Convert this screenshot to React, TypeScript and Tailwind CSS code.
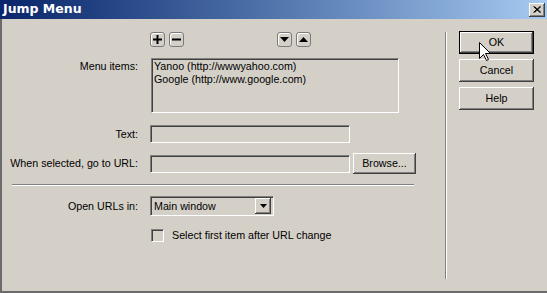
import React from 'react';

const sunken =
  'border border-t-[#808080] border-l-[#808080] border-b-white border-r-white shadow-[inset_1px_1px_0_#404040,inset_-1px_-1px_0_#d4d0c8]';
const raised =
  'bg-[#d4d0c8] shadow-[inset_-1px_-1px_0_#404040,inset_1px_1px_0_#ffffff,inset_-2px_-2px_0_#808080,inset_2px_2px_0_#d4d0c8]';

function ToolButton({ children }: { children: React.ReactNode }) {
  return (
    <div className="w-[15px] h-[15px] rounded-[3px] border border-[#7a7a7a] shadow-[inset_1px_1px_0_#ffffff] flex items-center justify-center">
      {children}
    </div>
  );
}

function Label({ children, top }: { children: React.ReactNode; top?: boolean }) {
  return (
    <div className={`w-[136px] shrink-0 text-right leading-[13px] ${top ? 'pt-[2px] self-start' : ''}`}>
      {children}
    </div>
  );
}

function App() {
  return (
    <div className="relative w-[547px] h-[293px] flex flex-col bg-[#d4d0c8] text-black text-[10.7px] font-['Liberation_Sans',Arial,sans-serif] overflow-hidden select-none">
      {/* title bar */}
      <div className="h-[19px] shrink-0 flex items-center justify-between pl-[3px] pr-[2px] bg-linear-to-r from-[#0a246a] to-[#a6caf0]">
        <span className="text-white font-bold text-[12.5px] leading-none font-['DejaVu_Sans',sans-serif]">Jump Menu</span>
        <div className={`w-[16px] h-[14px] flex items-center justify-center ${raised}`}>
          <svg width="8" height="7" viewBox="0 0 8 7">
            <path d="M0.5 0.5 L7 6.5 M1.5 0.5 L8 6.5 M7 0.5 L0.5 6.5 M8 0.5 L1.5 6.5" stroke="#000" strokeWidth="1" />
          </svg>
        </div>
      </div>

      {/* body */}
      <div className="flex-1 flex border-l-2 border-b-2 border-[#6b6b6b]">
        <div className="w-[443px] shrink-0 pt-[13px] flex flex-col">
          {/* list toolbar */}
          <div className="flex h-[15px] ml-[148px]">
            <ToolButton>
              <svg width="9" height="9" viewBox="0 0 9 9">
                <rect x="3.5" y="0" width="2" height="9" fill="#000" />
                <rect x="0" y="3.5" width="9" height="2" fill="#000" />
              </svg>
            </ToolButton>
            <div className="ml-[4px]">
              <ToolButton>
                <svg width="9" height="9" viewBox="0 0 9 9">
                  <rect x="0" y="3.5" width="9" height="2" fill="#000" />
                </svg>
              </ToolButton>
            </div>
            <div className="ml-[93px]">
              <ToolButton>
                <svg width="9" height="5" viewBox="0 0 9 5">
                  <path d="M0 0 H9 L4.5 5 Z" fill="#000" />
                </svg>
              </ToolButton>
            </div>
            <div className="ml-[4px]">
              <ToolButton>
                <svg width="9" height="5" viewBox="0 0 9 5">
                  <path d="M0 5 H9 L4.5 0 Z" fill="#000" />
                </svg>
              </ToolButton>
            </div>
          </div>

          {/* menu items */}
          <div className="flex mt-[11px]">
            <Label top>Menu items:</Label>
            <div className={`ml-[13px] w-[248px] h-[55px] pl-[2px] leading-[13px] bg-[#d4d0c8] ${sunken}`}>
              <div className="pt-[1px]">Yanoo (http://wwwyahoo.com)</div>
              <div>Google (http://www.google.com)</div>
            </div>
          </div>

          {/* text */}
          <div className="flex items-center mt-[12px]">
            <Label>Text:</Label>
            <div className={`ml-[12px] w-[200px] h-[18px] ${sunken}`} />
          </div>

          {/* url */}
          <div className="flex items-center h-[21px] mt-[10px]">
            <Label>When selected, go to URL:</Label>
            <div className={`ml-[12px] w-[200px] h-[18px] ${sunken}`} />
            <div className={`ml-[3px] w-[63px] h-[21px] flex items-center justify-center ${raised}`}>
              Browse...
            </div>
          </div>

          {/* separator */}
          <div className="mt-[10px] ml-[10px] w-[402px] border-t border-t-[#808080] border-b border-b-white" />

          {/* open in */}
          <div className="flex items-center mt-[10px]">
            <Label>Open URLs in:</Label>
            <div className={`ml-[12px] w-[124px] h-[20px] flex items-center pl-[3px] pr-[2px] ${sunken}`}>
              <span className="flex-1">Main window</span>
              <div className={`w-[16px] h-[16px] flex items-center justify-center ${raised}`}>
                <svg width="7" height="4" viewBox="0 0 7 4">
                  <path d="M0 0 H7 L3.5 4 Z" fill="#000" />
                </svg>
              </div>
            </div>
          </div>

          {/* checkbox */}
          <div className="flex items-center mt-[13px] ml-[149px]">
            <div className={`w-[13px] h-[13px] ${sunken}`} />
            <span className="ml-[8px] leading-[13px]">Select first item after URL change</span>
          </div>
        </div>

        {/* vertical separator */}
        <div className="mt-[13px] mb-[12px] w-[2px] border-l border-l-[#808080] border-r border-r-white" />

        {/* action buttons */}
        <div className="pl-[12px] pt-[12px] flex flex-col gap-[5px]">
          <div className="w-[75px] h-[23px] border border-black">
            <div className={`w-full h-full flex items-center justify-center ${raised}`}>OK</div>
          </div>
          <div className={`w-[75px] h-[23px] flex items-center justify-center ${raised}`}>Cancel</div>
          <div className={`w-[75px] h-[23px] flex items-center justify-center ${raised}`}>Help</div>
        </div>
      </div>

      {/* mouse pointer */}
      <svg className="absolute left-[479px] top-[42px]" width="12" height="20" viewBox="0 0 12 20">
        <path
          d="M0.5 0.5 L0.5 16.5 L4.5 12.5 L7.5 18.5 L9.5 17.5 L6.5 11.5 L11.5 11.5 Z"
          fill="#fff"
          stroke="#000"
          strokeWidth="1"
        />
      </svg>
    </div>
  );
}

export default App;
